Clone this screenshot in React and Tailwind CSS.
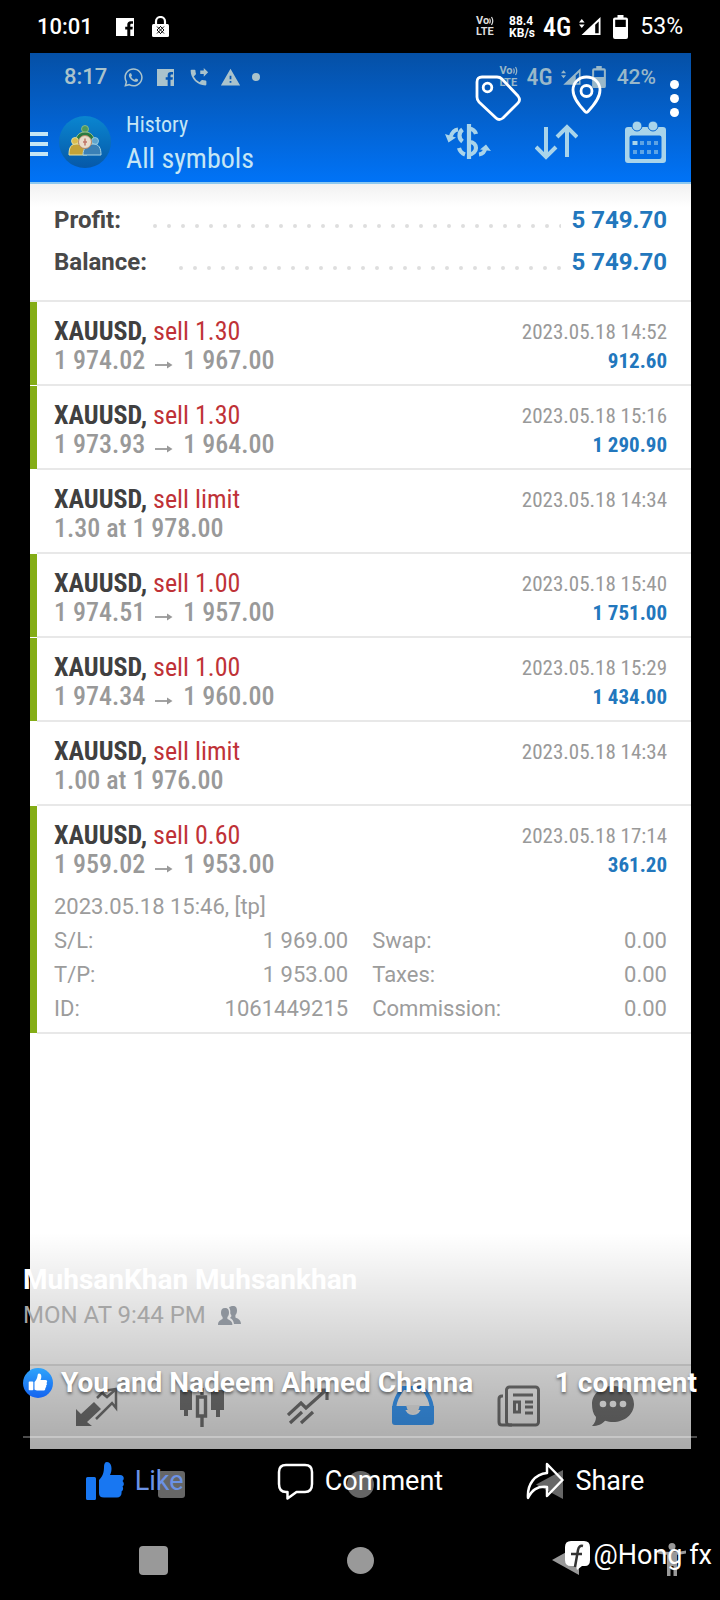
import React from 'react';
import { FaWhatsapp } from 'react-icons/fa';
import { MdPhoneForwarded, MdWarning } from 'react-icons/md';

const condensed = "font-['Roboto_Condensed','Roboto',sans-serif]";

const trades = [
  { side: 'sell 1.30', line: ['1 974.02', '1 967.00'], time: '2023.05.18 14:52', profit: '912.60' },
  { side: 'sell 1.30', line: ['1 973.93', '1 964.00'], time: '2023.05.18 15:16', profit: '1 290.90' },
  { side: 'sell limit', line: ['1.30 at 1 978.00'], time: '2023.05.18 14:34' },
  { side: 'sell 1.00', line: ['1 974.51', '1 957.00'], time: '2023.05.18 15:40', profit: '1 751.00' },
  { side: 'sell 1.00', line: ['1 974.34', '1 960.00'], time: '2023.05.18 15:29', profit: '1 434.00' },
  { side: 'sell limit', line: ['1.00 at 1 976.00'], time: '2023.05.18 14:34' },
  { side: 'sell 0.60', line: ['1 959.02', '1 953.00'], time: '2023.05.18 17:14', profit: '361.20', open: true },
];

const details = [
  ['S/L:', '1 969.00', 'Swap:', '0.00'],
  ['T/P:', '1 953.00', 'Taxes:', '0.00'],
  ['ID:', '1061449215', 'Commission:', '0.00'],
];

function FbSquare({ className }) {
  return (
    <svg viewBox="0 0 18 18" className={className} fill="currentColor" aria-hidden="true">
      <path d="M0 0h18v18h-3.700v-6.500h2.200l.3-2.800h-2.500V7.200c0-.9.400-1.400 1.300-1.400H17V3.200h-2.300c-2.200 0-3.400 1.300-3.400 3.400v2.100H9.200v2.800h2.100V18H0z" />
    </svg>
  );
}

function Lock() {
  return (
    <svg viewBox="0 0 17 21" className="h-[21px] w-[17px]" aria-hidden="true">
      <path d="M4 9V5.500a4.500 4.500 0 0 1 9 0V9" fill="none" stroke="#fff" strokeWidth="2.200" />
      <rect y="8" width="17" height="13" rx="1.500" fill="#fff" />
      <path d="M5 10.500l7 7M8 10l4 4M12 10.500l-7 7M9 10l-4 4M5 14l4 4M12 14l-4 4" stroke="#111" strokeWidth="1" />
    </svg>
  );
}

function Signal({ className }) {
  return (
    <svg viewBox="0 0 22 19" className={className} fill="currentColor" aria-hidden="true">
      <path d="M0 5.500L2.800 2l2.800 3.500zM0 7.500L2.800 11l2.800-3.500z" />
      <path fillRule="evenodd" d="M21.500 0v18H2.500zM19.700 4.500l-3.500 3.300v8.500h3.500z" />
    </svg>
  );
}

function Battery({ className }) {
  return (
    <svg viewBox="0 0 15 24" className={className} fill="currentColor" aria-hidden="true">
      <path fillRule="evenodd" d="M4.500 0h6v2.500H13a2 2 0 0 1 2 2V22a2 2 0 0 1-2 2H2a2 2 0 0 1-2-2V4.500a2 2 0 0 1 2-2h2.500zM2.200 4.800V12h10.600V4.800z" />
    </svg>
  );
}

function Volte({ className }) {
  return (
    <div className={`flex flex-col text-[11px] leading-[12px] font-bold ${className}`}>
      <span className="flex h-[11px] items-center">
        Vo
        <svg viewBox="0 0 6 10" className="h-[10px] w-[6px]" fill="none" stroke="currentColor" strokeWidth="1.200" aria-hidden="true">
          <path d="M.5 2.500q1.500 2.500 0 5M2.500 1q2.500 4 0 8" />
        </svg>
      </span>
      <span>LTE</span>
    </div>
  );
}

function PhoneStatusBar() {
  return (
    <header className="flex h-[53px] items-center justify-between pr-[37px] pl-[37px] text-white">
      <div className="flex items-center">
        <time className="w-[79px] text-[22px] leading-6 font-medium">10:01</time>
        <FbSquare className="h-[18px] w-[18px]" />
        <div className="ml-[18px]">
          <Lock />
        </div>
      </div>
      <div className="flex items-center">
        <Volte className="mr-[14px] text-[#ddd]" />
        <div className="mr-2 text-[12px] leading-[12px] font-bold">
          <div>88.4</div>
          <div>KB/s</div>
        </div>
        <span className={`${condensed} mr-2 text-[26px] leading-6 font-medium`}>4G</span>
        <Signal className="mr-3 h-[19px] w-[22px]" />
        <Battery className="mr-[12px] h-6 w-[15px]" />
        <span className="text-[23px] leading-6">53%</span>
      </div>
    </header>
  );
}

function Avatar() {
  return (
    <svg viewBox="0 0 54 54" className="h-[54px] w-[54px]" aria-hidden="true">
      <defs>
        <linearGradient id="disc" x1="0" y1="0" x2="0" y2="1">
          <stop offset="0" stopColor="#0a86d0" />
          <stop offset="1" stopColor="#0658a8" />
        </linearGradient>
      </defs>
      <circle cx="27" cy="27" r="26" fill="url(#disc)" />
      <circle cx="27" cy="14" r="3.500" fill="#4f9a5a" stroke="#9cc08c" strokeWidth=".8" />
      <path d="M17 30c0-9 4-13 10-13s10 4 10 13z" fill="#2a7a42" stroke="#9cc08c" strokeWidth="1" />
      <circle cx="17" cy="26" r="3.500" fill="#d9bc50" stroke="#ece6a8" strokeWidth=".8" />
      <path d="M11 40c0-8 2-11 8-11s10 4 10 11z" fill="#c2a238" stroke="#e8e3a0" strokeWidth="1" />
      <circle cx="37" cy="26" r="3.500" fill="#5fa6cf" stroke="#a8d4e6" strokeWidth=".8" />
      <path d="M25 40c0-7 4-11 10-11s8 4 8 11z" fill="#3a80b6" stroke="#a8d4e6" strokeWidth="1" />
      <circle cx="27" cy="27" r="6.500" fill="#e9dccb" stroke="#b98a6a" strokeWidth="1" />
      <path d="M27 23.500v7M25 27h4" stroke="#c0766a" strokeWidth="1.500" />
    </svg>
  );
}

function AppBar() {
  return (
    <div className="border-b-2 border-[#8cc8f0] bg-linear-to-b from-[#0550a6] to-[#0073f7] text-[#c5e6f5]">
      <div className="flex h-[48px] items-center justify-between pr-[35px] pl-[34px] text-[#aac3cc]">
        <div className="flex items-center">
          <time className="w-[59px] text-[22px] leading-6 font-medium">8:17</time>
          <FaWhatsapp className="mr-[13px] h-[21px] w-[21px]" aria-hidden="true" />
          <FbSquare className="mr-[14px] h-[17px] w-[17px]" />
          <MdPhoneForwarded className="mr-[11px] h-[21px] w-[21px]" aria-hidden="true" />
          <MdWarning className="mr-[11px] h-[21px] w-[21px]" aria-hidden="true" />
          <span className="h-2 w-2 rounded-full bg-current" />
        </div>
        <div className="flex items-center opacity-90">
          <Volte className="mr-2" />
          <span className={`${condensed} mr-2 text-[24px] leading-6 font-medium`}>4G</span>
          <Signal className="mr-[11px] h-[18px] w-[20px]" />
          <Battery className="mr-[11px] h-[22px] w-[14px]" />
          <span className="text-[21px] leading-6 font-medium">42%</span>
        </div>
      </div>
      <div className="flex h-[81px] items-center justify-between">
        <div className="flex items-center">
          <button type="button" aria-label="Menu" className="flex w-[18px] flex-col gap-[6px] pt-1">
            <span className="h-1 w-full bg-current" />
            <span className="h-1 w-full bg-current" />
            <span className="h-1 w-full bg-current" />
          </button>
          <div className="mr-[14px] ml-[10px]">
            <Avatar />
          </div>
          <div className={`${condensed} pt-[6px]`}>
            <div className="text-[22px] leading-[32px]">History</div>
            <h1 className="pb-1 text-[28px] leading-[36px]">All symbols</h1>
          </div>
        </div>
        <div className="flex pr-px text-[#a9d4ea]">
          <button type="button" aria-label="Symbols" className="flex w-[89px] items-center justify-center">
            <svg viewBox="0 0 46 36" className="h-9 w-[46px]" fill="none" stroke="currentColor" strokeWidth="3.800">
              <path d="M24 0v35" strokeWidth="4.200" />
              <path d="M31 10c-1-3.500-3.500-5-7-5.500M17.500 5.500c-4 3-4 9 0 12M24 18c5 0 7 3 7 6s-3 6.500-7 6.500M20 30.500c-3-1-5-3-6-6.500" strokeWidth="4.200" />
              <path d="M13 5.500C9 6 7 8.500 5.500 13M34 30.500c4-.5 6-3 6.500-7" />
              <path d="M0 10l3.500 8.500L11 13.500zM35 25.500l6-5 5 6.500z" fill="currentColor" stroke="none" />
            </svg>
          </button>
          <button type="button" aria-label="Sort" className="flex w-[89px] items-center justify-center">
            <svg viewBox="0 0 43 36" className="h-9 w-[43px]" fill="none" stroke="currentColor" strokeWidth="4">
              <path d="M11 3v30M1 23l10 10 10-10M32 33V3M22 13L32 3l10 10" />
            </svg>
          </button>
          <button type="button" aria-label="Period" className="flex w-[89px] items-center justify-center">
            <svg viewBox="0 0 41 42" className="h-[42px] w-[41px]" fill="currentColor">
              <path fillRule="evenodd" d="M3 6h35a3 3 0 0 1 3 3v30a3 3 0 0 1-3 3H3a3 3 0 0 1-3-3V9a3 3 0 0 1 3-3zM6.500 14.500a2 2 0 0 0-2 2V36a2 2 0 0 0 2 2h28a2 2 0 0 0 2-2V16.500a2 2 0 0 0-2-2z" />
              <circle cx="12" cy="5" r="5" stroke="#0364d2" strokeWidth="1" />
              <circle cx="28" cy="5" r="5" stroke="#0364d2" strokeWidth="1" />
              <path d="M7.500 20h5v4h-5z" />
              <path d="M15 20h4v4h-4zM22 20h4v4h-4zM29 20h4v4h-4zM8 29h4v4H8zM15 29h4v4h-4zM22 29h4v4h-4zM29 29h4v4h-4z" opacity=".55" />
            </svg>
          </button>
        </div>
      </div>
    </div>
  );
}

function SummaryRow({ label, value }) {
  return (
    <div className="flex h-[42px] items-center text-[24px] font-bold">
      <dt className="text-[#484848]">{label}</dt>
      <svg className="mt-3 mr-[10px] ml-8 h-1 flex-1" aria-hidden="true">
        <line x1="2" y1="2" x2="100%" y2="2" stroke="#dedede" strokeWidth="4" strokeLinecap="round" strokeDasharray="0 14" />
      </svg>
      <dd className="text-[#2277bd]">{value}</dd>
    </div>
  );
}

function Trade({ trade }) {
  return (
    <li className="flex">
      <div className={`mb-px w-[7px] ${trade.profit ? 'bg-[#84ad16]' : 'bg-white'}`} />
      <div className="flex-1 border-b-2 border-[#e8e8e8] pr-6 pl-[17px]">
        <div className="flex h-[82px] items-start justify-between pt-[15px]">
          <div className={`${condensed} text-[26px] leading-[29px]`}>
            <div className="font-bold text-[#404040]">
              XAUUSD, <span className="font-normal text-[#bf3237]">{trade.side}</span>
            </div>
            <div className="flex items-center font-medium text-[#999]">
              {trade.line[0]}
              {trade.line[1] && (
                <>
                  <svg viewBox="0 0 18 10" className="mx-[10px] mt-2 h-[10px] w-[18px]" fill="none" stroke="currentColor" strokeWidth="1.800" aria-label="to">
                    <path d="M0 5h16" />
                    <path d="M12 1.500l5.500 3.500-5.500 3.500z" fill="currentColor" stroke="none" />
                  </svg>
                  {trade.line[1]}
                </>
              )}
            </div>
          </div>
          <div className={`${condensed} pt-px text-right text-[21px] leading-[29px]`}>
            <div className="text-[#999]">{trade.time}</div>
            <div className="font-bold text-[#2277bd]">{trade.profit}</div>
          </div>
        </div>
        {trade.open && (
          <div className="pt-[2px] pb-[6px] text-[22px] leading-[34px] text-[#9c9c9c]">
            <div>2023.05.18 15:46, [tp]</div>
            <table className="w-full">
              <tbody>
                {details.map((row) => (
                  <tr key={row[0]}>
                    <th scope="row" className="w-[24%] p-0 text-left font-normal">{row[0]}</th>
                    <td className="w-[24%] p-0 text-right">{row[1]}</td>
                    <th scope="row" className="w-[28%] p-0 pl-6 text-left font-normal">{row[2]}</th>
                    <td className="w-[24%] p-0 text-right">{row[3]}</td>
                  </tr>
                ))}
              </tbody>
            </table>
          </div>
        )}
      </div>
    </li>
  );
}

const tab = 'flex items-center justify-center';

function TabBar() {
  return (
    <nav className="grid h-[85px] grid-cols-6 border-t-2 border-[#e2e2e2] bg-[#fafafa] px-[14px] pb-[3px] text-[#757575]">
      <button type="button" aria-label="Quotes" className={tab}>
        <svg viewBox="0 0 42 42" className="h-[42px] w-[42px]">
          <path d="M0 24v17h16l-5-4 14-13-7-7L5 29z" fill="currentColor" />
          <path d="M21 13l5-5 5 4 8-7M20 34l16-16 4 5V4l-13 2" fill="none" stroke="currentColor" strokeWidth="2.500" />
        </svg>
      </button>
      <button type="button" aria-label="Charts" className={tab}>
        <svg viewBox="0 0 44 42" className="h-[42px] w-[44px]" fill="currentColor">
          <path d="M0 5h12v20H8v6H4v-6H0zM31 5h13v20h-4v7h-4v-7h-5z" />
          <path d="M22 3v7M22 32v10M17.500 12h8v19h-8z" fill="none" stroke="currentColor" strokeWidth="3.400" />
        </svg>
      </button>
      <button type="button" aria-label="Trade" className={tab}>
        <svg viewBox="0 0 42 40" className="h-10 w-[42px]" fill="none" stroke="currentColor" strokeWidth="3.200">
          <path d="M1 29l13-12 5 5L38 5M28 4h12v10M3 37l12-11M14 37l12-11" />
        </svg>
      </button>
      <button type="button" aria-label="History" className={`${tab} text-[#3ea0ff]`}>
        <svg viewBox="0 0 42 40" className="h-10 w-[42px]">
          <path d="M2 22C3 13 7 7 11 2h20c4 5 8 11 9 20z" fill="#fff" fillOpacity=".5" stroke="currentColor" strokeWidth="4" />
          <path d="M0 20h12q2 9 9 9t9-9h12v16q0 3-3 3H3q-3 0-3-3z" fill="currentColor" />
          <path d="M5 19h9q2 9 7 9t7-9h9z" fill="#f2f2f2" />
        </svg>
      </button>
      <button type="button" aria-label="News" className={tab}>
        <svg viewBox="0 0 43 42" className="h-[42px] w-[43px]" fill="none" stroke="currentColor" strokeWidth="3">
          <rect x="9.500" y="2" width="32" height="38" rx="3" />
          <path d="M6 11H5q-3 0-3 3v23q0 3 3 3h10M16 10h20M28 17h8M28 22h8M28 28h8M17.500 17h5v10h-5z" />
        </svg>
      </button>
      <button type="button" aria-label="Messages" className="flex items-center pl-5">
        <svg viewBox="0 0 42 42" className="h-[42px] w-[42px]">
          <path d="M21 1c12 0 21 8 21 18s-9 18-21 18c-3 0-5-.4-8-1.300C10 39 6 41 0 41c3-3 4-6 4-9C1 29 0 24 0 19 0 9 9 1 21 1z" fill="currentColor" />
          <g fill="#fff">
            <circle cx="11" cy="19" r="3.300" />
            <circle cx="21" cy="19" r="3.300" />
            <circle cx="31" cy="19" r="3.300" />
          </g>
        </svg>
      </button>
    </nav>
  );
}

function Photo() {
  return (
    <section className="col-start-1 row-start-1 mr-[29px] ml-[30px] flex flex-col">
      <div className="relative flex flex-1 flex-col bg-white">
        <AppBar />
        <dl className="border-b-2 border-[#e8e8e8] bg-linear-to-b from-[#f1f1f1] to-white to-20% px-6 pt-[15px] pb-[17px]">
          <SummaryRow label="Profit:" value="5 749.70" />
          <SummaryRow label="Balance:" value="5 749.70" />
        </dl>
        <ul>
          {trades.map((trade, i) => (
            <Trade key={i} trade={trade} />
          ))}
        </ul>
        <div className="flex-1" />
        <TabBar />
        <div className="pointer-events-none absolute inset-x-0 bottom-0 h-[216px] bg-linear-to-b from-black/0 to-black/32" />
      </div>
      <div className="grid h-[75px] grid-cols-3 items-center justify-items-center px-[47px] pb-[5px] text-[#666]">
        <span className="h-[27px] w-[27px] rounded-[3px] bg-current" />
        <span className="h-[27px] w-[27px] rounded-full bg-current" />
        <svg viewBox="0 0 27 29" className="h-[29px] w-[27px]" fill="currentColor" aria-hidden="true">
          <path d="M27 0v29L0 14.500z" />
        </svg>
      </div>
    </section>
  );
}

const action = 'flex items-center justify-center gap-[11px] text-[27px] leading-8';

function Viewer() {
  return (
    <section className="relative col-start-1 row-start-1 flex flex-col text-white">
      <div className="flex justify-end pt-[22px] pr-[2px]">
        <button type="button" aria-label="Tag people" className="flex w-[88px] justify-center">
          <svg viewBox="0 0 46 46" className="h-[46px] w-[46px]" fill="none" stroke="currentColor" strokeWidth="2.800">
            <path d="M7 2h15q3 0 5 2l16 17q3 4 0 7L28 43q-4 3-7 0L4 27q-2-2-2-5V7q0-5 5-5z" />
            <circle cx="12.500" cy="12.500" r="4.300" />
          </svg>
        </button>
        <button type="button" aria-label="Add location" className="flex w-[88px] justify-center">
          <svg viewBox="0 0 31 40" className="h-10 w-[31px]" fill="none" stroke="currentColor" strokeWidth="2.800">
            <path d="M15.500 2C8 2 2 7.500 2 15c0 8 6 15 12 21.500q1.500 1.500 3 0C23 30 29 23 29 15 29 7.500 23 2 15.500 2z" />
            <circle cx="15.500" cy="16" r="5.500" />
          </svg>
        </button>
        <button type="button" aria-label="More" className="flex w-[88px] flex-col items-center gap-[5px] pt-[5px]">
          <span className="h-[9px] w-[9px] rounded-full bg-current" />
          <span className="h-[9px] w-[9px] rounded-full bg-current" />
          <span className="h-[9px] w-[9px] rounded-full bg-current" />
        </button>
      </div>
      <div className="flex-1" />
      <div className="px-[23px]">
        <h2 className="text-[28px] leading-9 font-bold">MuhsanKhan Muhsankhan</h2>
        <div className="flex items-center gap-[12px] text-[24px] leading-[34px] text-[#a5a5a5]">
          MON AT 9:44 PM
          <svg viewBox="0 0 23 19" className="h-[19px] w-[23px]" fill="#8d939b" aria-label="Friends">
            <path d="M7 2c3 0 4 2 4 4.500 0 2-.6 3.500-1.600 4.500v2c1.600 1 5 1.500 5 6H0c0-4.500 3-5 4.600-6v-2C3.600 10 3 8.500 3 6.500 3 4 4 2 7 2z" />
            <path d="M15 0c3 0 4 2 4 4.500 0 2-.6 3.500-1.600 4.500v2.500c2 1 5.600 2 5.600 6.500h-7c-.4-3.500-2-5-4-6l1.300-1.500V9C12 8 12.300 7 12.300 5.500c0-1.700-.6-3-1.300-4C12 .5 13.300 0 15 0z" />
          </svg>
        </div>
        <div className="flex items-center justify-between pt-[33px] pb-[35px] text-[28px] leading-9 font-bold text-shadow-[0_2px_3px_rgb(0_0_0/0.5)]">
          <div className="flex items-center gap-2">
            <svg viewBox="0 0 30 30" className="h-[30px] w-[30px]" aria-label="Like">
              <defs>
                <linearGradient id="like" x1="0" y1="0" x2="0" y2="1">
                  <stop offset="0" stopColor="#2fa4fb" />
                  <stop offset="1" stopColor="#1463f0" />
                </linearGradient>
              </defs>
              <circle cx="15" cy="15" r="15" fill="url(#like)" />
              <path d="M6.500 13.500h3q.8 0 .8.800v7.200q0 .8-.8.800h-3q-.8 0-.8-.8v-7.200q0-.8.800-.8zM11.500 14c2-2 2.700-4 3-6 .2-1.500.5-2.500 1.500-2.500 1.500 0 2.300 1.300 2.300 3 0 1.500-.3 2.500-.8 3.500h5c1.800 0 2.200 2 1 3 .7.800.6 1.900-.4 2.600.4.900 0 1.900-.8 2.300.3 1.700-.6 2.600-2.300 2.600h-5c-1.500 0-2.500-.4-3.500-1z" fill="#fff" />
            </svg>
            <span>You and Nadeem Ahmed Channa</span>
          </div>
          <span>1 comment</span>
        </div>
        <hr className="border-t-2 border-white/30" />
      </div>
      <div className="grid h-[86px] grid-cols-3 px-[22px]">
        <button type="button" className={`${action} text-[#6b92e6]`}>
          <svg viewBox="0 0 38 38" className="h-[38px] w-[38px]" fill="#1877f2" aria-hidden="true">
            <path d="M1.500 15h7q1.500 0 1.500 1.500v20q0 1.500-1.500 1.500h-7Q0 38 0 36.500v-20Q0 15 1.500 15zM13 18c4-4 5-8 5-13 0-3 .8-5 3-5 3 0 4.500 3 4.500 6.500 0 2.500-.5 4.500-1.500 6.500h10c4 0 4.800 4 2.500 6 2 2 1.500 4.500 0 5.500 1.200 2 .5 4.200-1 5 .6 3.500-1.500 6-4.500 6H18c-3.500 0-5-1.500-5-4.500z" />
          </svg>
          Like
        </button>
        <button type="button" className={action}>
          <svg viewBox="0 0 37 37" className="h-[37px] w-[37px]" fill="none" stroke="currentColor" strokeWidth="2.500" strokeLinejoin="round" aria-hidden="true">
            <path d="M9 2h19q7 0 7 7v12q0 8-7 8h-8.500l-9 6.500V29H9q-7 0-7-8V9q0-7 7-7z" />
          </svg>
          Comment
        </button>
        <button type="button" className={action}>
          <svg viewBox="0 0 38 38" className="h-[38px] w-[38px]" fill="none" stroke="currentColor" strokeWidth="2.500" strokeLinejoin="round" aria-hidden="true">
            <path d="M21 2l15.500 16L21 34V25C11 24 6 28 2 36 1 22 9 12 21 11z" />
          </svg>
          Share
        </button>
      </div>
    </section>
  );
}

function SystemNav() {
  return (
    <footer className="relative h-[76px] text-[#999]">
      <div className="grid h-[72px] grid-cols-[1fr_auto_1fr] items-center">
        <button type="button" aria-label="Recent apps" className="ml-[139px] h-[29px] w-[29px] rounded-[4px] bg-current" />
        <button type="button" aria-label="Home" className="h-[27px] w-[27px] rounded-full bg-current" />
        <div className="flex items-center justify-between pr-[34px] pl-[178px]">
          <button type="button" aria-label="Back">
            <svg viewBox="0 0 27 30" className="h-[30px] w-[27px]" fill="currentColor">
              <path d="M27 0v30L0 15z" />
            </svg>
          </button>
          <button type="button" aria-label="Accessibility">
            <svg viewBox="0 0 28 34" className="h-[34px] w-[28px]" fill="currentColor">
              <circle cx="14" cy="3.500" r="3.500" />
              <path d="M0 7.500q14 3 28 0v3q-4 1-9 1.300V33h-3.500V23h-3v10H9V11.800Q4 11.500 0 10.500z" />
            </svg>
          </button>
        </div>
      </div>
      <div className="absolute top-[13px] right-2 flex items-center gap-1 text-[27px] leading-9 text-white">
        <svg viewBox="0 0 25 29" className="h-[29px] w-[25px]" aria-hidden="true">
          <path d="M6 0h13q6 0 6 6v13q0 6-5 6h-3l-5 4-1-4H6q-6 0-6-6V6q0-6 6-6z" fill="#fff" />
          <path d="M18 5q-4-1-5 4l-3 17M6 13h11" fill="none" stroke="#333" strokeWidth="2.500" />
        </svg>
        <span>@Hong fx</span>
      </div>
    </footer>
  );
}

export default function App() {
  return (
    <div className="flex min-h-screen flex-col bg-black font-['Roboto',sans-serif]">
      <PhoneStatusBar />
      <main className="grid flex-1 grid-cols-1">
        <Photo />
        <Viewer />
      </main>
      <SystemNav />
    </div>
  );
}
